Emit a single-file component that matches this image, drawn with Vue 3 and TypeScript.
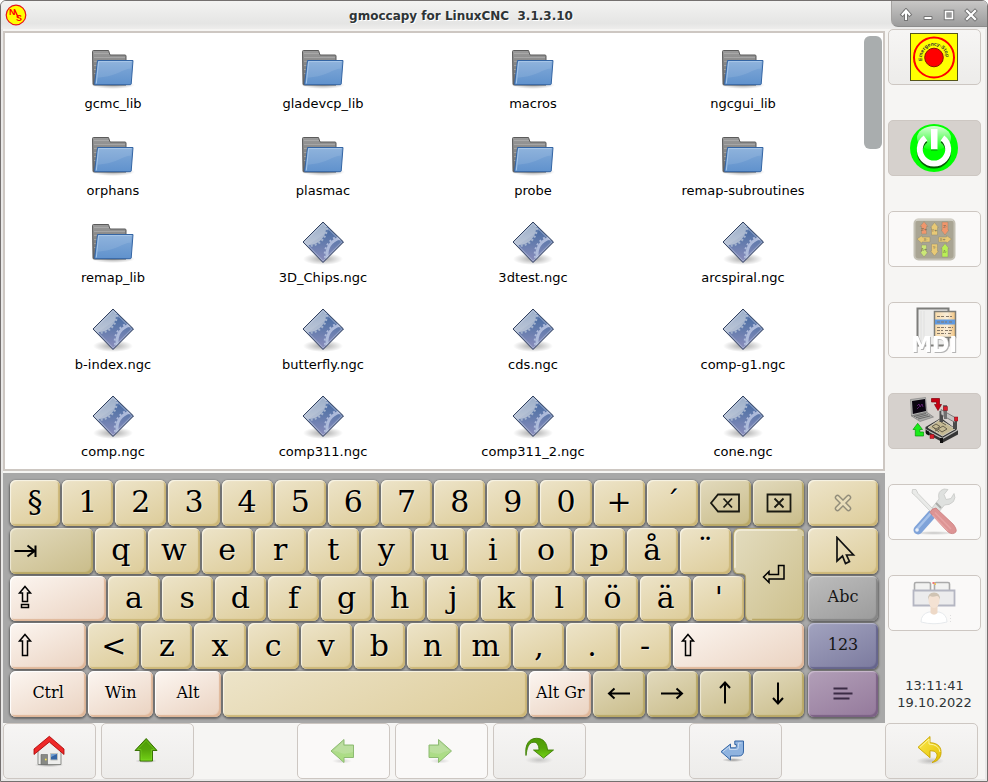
<script setup lang="ts">
interface FileEntry {
  name: string
  kind: 'folder' | 'gcode'
}

interface Key {
  label: string
  weight: number
  icon?: string
  tone?: string
  small?: boolean
  start?: boolean
}

interface ToolButton {
  label: string
  icon: string
  disabled?: boolean
  active?: boolean
}

const folder = (name: string): FileEntry => ({ name, kind: 'folder' })
const gcode = (name: string): FileEntry => ({ name, kind: 'gcode' })

const files: FileEntry[] = [
  ...['gcmc_lib', 'gladevcp_lib', 'macros', 'ngcgui_lib', 'orphans', 'plasmac', 'probe', 'remap-subroutines', 'remap_lib'].map(folder),
  ...['3D_Chips.ngc', '3dtest.ngc', 'arcspiral.ngc', 'b-index.ngc', 'butterfly.ngc', 'cds.ngc', 'comp-g1.ngc', 'comp.ngc', 'comp311.ngc', 'comp311_2.ngc', 'cone.ngc'].map(gcode),
]

const letters = (text: string): Key[] => [...text].map((label) => ({ label, weight: 51 }))
const symbol = (label: string, icon: string, weight = 51): Key => ({ label, icon, weight, tone: 'olive' })
const modifier = (label: string, weight: number): Key => ({ label, weight, tone: 'rose', small: true })

const rows: Key[][] = [
  [{ label: '§', weight: 50 }, ...letters('1234567890+´'), symbol('Backspace', 'k-back'), symbol('Delete', 'k-del')],
  [{ ...symbol('Tab', 'k-tab', 83), start: true }, ...letters('qwertyuiopå¨')],
  [{ label: 'Caps Lock', icon: 'k-caps', weight: 96, tone: 'rose', start: true }, ...letters("asdfghjklöä'")],
  [
    { label: 'Left Shift', icon: 'k-shift', weight: 76, tone: 'rose', start: true },
    ...letters('<zxcvbnm,.-'),
    { label: 'Right Shift', icon: 'k-shift', weight: 131, tone: 'rose', start: true },
  ],
  [
    modifier('Ctrl', 76),
    modifier('Win', 65),
    modifier('Alt', 65),
    { label: ' ', weight: 304 },
    modifier('Alt Gr', 62),
    symbol('Left', 'k-left'),
    symbol('Right', 'k-right'),
    symbol('Up', 'k-up'),
    symbol('Down', 'k-down'),
  ],
]

const sideKeys: Key[] = [
  { label: 'Close keyboard', icon: 'k-close', weight: 1 },
  { label: 'Move keyboard', icon: 'k-pointer', weight: 1 },
  { label: 'Abc', weight: 1, tone: 'gray', small: true },
  { label: '123', weight: 1, tone: 'blue', small: true },
  { label: 'Snippets', icon: 'k-menu', weight: 1, tone: 'violet' },
]

const modes: ToolButton[] = [
  { label: 'Emergency stop', icon: 'i-estop' },
  { label: 'Machine power', icon: 'i-power', active: true },
  { label: 'Manual mode', icon: 'i-jog', disabled: true },
  { label: 'MDI mode', icon: 'i-mdi', disabled: true },
  { label: 'Auto mode', icon: 'i-auto', active: true },
  { label: 'Settings', icon: 'i-tools', disabled: true },
  { label: 'User tabs', icon: 'i-user', disabled: true },
]

const actions: (ToolButton | null)[] = [
  { label: 'Home directory', icon: 'i-home' },
  { label: 'Parent directory', icon: 'i-up' },
  null,
  { label: 'Previous file', icon: 'i-prev', disabled: true },
  { label: 'Next file', icon: 'i-next', disabled: true },
  { label: 'Jump to user directory', icon: 'i-jump' },
  null,
  { label: 'Select file', icon: 'i-select' },
  null,
  { label: 'Back', icon: 'i-undo' },
]

const windowControls = [
  { label: 'Shade', icon: 'w-shade' },
  { label: 'Minimise', icon: 'w-min' },
  { label: 'Maximise', icon: 'w-max' },
  { label: 'Close', icon: 'w-close' },
]
</script>

<template>
  <div class="window">
    <svg class="sprite" width="0" height="0" aria-hidden="true">
      <defs>
        <linearGradient id="gBack" x1="0" y1="0" x2="0" y2="1"><stop offset="0" stop-color="#9a9a9a" /><stop offset="1" stop-color="#666" /></linearGradient>
        <linearGradient id="gFront" x1="0" y1="0" x2="0" y2="1"><stop offset="0" stop-color="#82aad8" /><stop offset="1" stop-color="#6092cd" /></linearGradient>
        <linearGradient id="gDia" x1="0" y1="0" x2="0" y2="1"><stop offset="0" stop-color="#3f669f" /><stop offset=".45" stop-color="#5f79ab" /><stop offset="1" stop-color="#8d8fbd" /></linearGradient>
        <linearGradient id="gGear" x1="0" y1="0" x2="0" y2="1"><stop offset="0" stop-color="#7f9abc" /><stop offset="1" stop-color="#b4bfd3" /></linearGradient>
        <radialGradient id="gShade"><stop offset="0" stop-color="#000" stop-opacity=".35" /><stop offset="1" stop-color="#000" stop-opacity="0" /></radialGradient>
        <linearGradient id="gGreen" x1="0" y1="0" x2="0" y2="1"><stop offset="0" stop-color="#4e9a06" /><stop offset=".5" stop-color="#56a60a" /><stop offset="1" stop-color="#73d216" /></linearGradient>
        <linearGradient id="gPale" x1="0" y1="0" x2="0" y2="1"><stop offset="0" stop-color="#b4d69a" /><stop offset="1" stop-color="#a9e07c" /></linearGradient>
        <linearGradient id="gGloss" x1="0" y1="0" x2="0" y2="1"><stop offset="0" stop-color="#fff" stop-opacity=".85" /><stop offset="1" stop-color="#fff" stop-opacity=".05" /></linearGradient>
        <linearGradient id="gPage" x1="0" y1="0" x2="1" y2="0"><stop offset="0" stop-color="#f8d9a6" /><stop offset=".6" stop-color="#f8edd9" /><stop offset="1" stop-color="#f2c27c" /></linearGradient>
        <linearGradient id="gKey" x1="0" y1="0" x2="1" y2="1"><stop offset="0" stop-color="#e3dcbf" /><stop offset="1" stop-color="#cdc08c" /></linearGradient>
        <linearGradient id="gYellow" x1="0" y1="0" x2="1" y2="1"><stop offset="0" stop-color="#fce94f" /><stop offset="1" stop-color="#e3c000" /></linearGradient>
        <clipPath id="cDia"><path d="M24 4 44.500 24 24 44.500 4 24Z" /></clipPath>
        <path id="pStop" d="M12.400 27.600A12 12 0 1 1 35 29.500" />
      </defs>

      <symbol id="i-folder" viewBox="0 0 48 48">
        <ellipse cx="24" cy="41" rx="22" ry="4" fill="url(#gShade)" />
        <path d="M3.500 7.500q0-1 1-1h15l1.500 4.500h15q1 0 1 1v29h-32q-1 0-1-1Z" fill="url(#gBack)" stroke="#5b5b5b" />
        <path d="M5 13.500h31M5 17.500h3M5 21.500h3M5 25.500h3M5 29.500h3M5 9.500h15" stroke="#b5b5b5" stroke-width="1" opacity=".6" />
        <path d="M8.500 16.500h35.500l-1.800 23.500q-.200.700-1 .700h-35q-.800 0-.6-1Z" fill="url(#gFront)" stroke="#3465a4" />
        <path d="M9.500 17.800h33l-.8 7c-9 0-11 7-33 9Z" fill="#fff" opacity=".1" />
        <path d="M7.300 39.500 9.600 17.600h33" fill="none" stroke="#b4cfec" stroke-width=".8" />
      </symbol>
      <symbol id="i-gcode" viewBox="0 0 48 48">
        <ellipse cx="24" cy="41" rx="20" ry="6" fill="url(#gShade)" />
        <path d="M24 4 44.500 24 24 44.500 4 24Z" fill="url(#gDia)" />
        <g clip-path="url(#cDia)">
          <circle cx="10" cy="10" r="17" fill="url(#gGear)" />
          <circle cx="10" cy="10" r="17.800" fill="none" stroke="#a3b3cd" stroke-width="2.200" stroke-dasharray="2 2" />
          <circle cx="44" cy="36" r="16" fill="none" stroke="#aebbdb" stroke-width="3" />
          <circle cx="44" cy="36" r="18.200" fill="none" stroke="#aebbdb" stroke-width="2" stroke-dasharray="2 2.400" />
          <path d="M0 24 24 0 34 10 8 28Z" fill="#fff" opacity=".1" />
        </g>
        <path d="M24 5.800 42.700 24 24 42.800 5.800 24Z" fill="none" stroke="#c9d3e4" stroke-width=".8" opacity=".7" />
        <path d="M24 4 44.500 24 24 44.500 4 24Z" fill="none" stroke="#32415f" stroke-width="1" />
      </symbol>

      <symbol id="i-estop" viewBox="0 0 48 48">
        <rect x=".500" y=".500" width="47" height="47" fill="#ff0" stroke="#55551a" />
        <circle cx="24" cy="24.500" r="20" fill="none" stroke="#f00" stroke-width="2" />
        <circle cx="24" cy="24.500" r="9.300" fill="#f00" stroke="#8a1000" />
      </symbol>
      <symbol id="i-power" viewBox="0 0 48 48">
        <circle cx="24" cy="24" r="24" fill="#0f0" />
        <ellipse cx="24" cy="14" rx="17" ry="12" fill="url(#gGloss)" />
        <path d="M15.500 14.500A14.200 14.200 0 1 0 32.500 14.500" fill="none" stroke="#075c07" stroke-width="6" transform="translate(0 1.500)" />
        <path d="M15.500 14A14.200 14.200 0 1 0 32.500 14" fill="none" stroke="#fff" stroke-width="6" />
        <path d="M21 5h6.500v20.500H21Z" fill="#fff" />
        <path d="M21 26h6.500" stroke="#0a8a0a" />
      </symbol>
      <symbol id="i-jog" viewBox="0 0 48 48">
        <rect x="4.500" y="4.500" width="40" height="40" rx="4" fill="#a9a594" stroke="#c3c0b4" stroke-width="2" />
        <path d="M6 5h37" stroke="#e4e3dc" />
        <g stroke="#8f8a75" stroke-width=".500">
          <path d="M14 6.500l4 5h-1.500v7.500h-5v-7.500H10Z" fill="#f0966c" /><path d="M24.500 7.500l4 5H27.500v7.500h-6v-7.500h-1Z" fill="#e8c975" /><path d="M35 20l4-5h-1V7h-6v8H31Z" fill="#f0966c" />
          <path d="M7 24l5-3.500V22h8v5h-8v1.500Z" fill="#e8c975" /><path d="M41.500 24l-5-3.500V22h-8v5h8v1.500Z" fill="#e8c975" />
          <path d="M14 42l4-5h-1.500v-7h-5v7H10Z" fill="#cbe877" /><path d="M24.500 41l4-5H27.500v-7h-6v7h-1Z" fill="#e8c975" /><path d="M35 28.500l4 5h-1v8.500h-6v-8.500H31Z" fill="#b9ef55" />
        </g>
      </symbol>
      <symbol id="i-mdi" viewBox="0 0 48 48">
        <rect x="7.500" y="2.500" width="31" height="37" fill="#ededec" stroke="#7d7d7a" stroke-width="2" />
        <path d="M11 5v32M14 5v32" stroke="#e0e0df" />
        <rect x="24.500" y="5.500" width="21" height="26" fill="url(#gPage)" stroke="#7d7d77" stroke-width="1.500" />
        <rect x="25" y="13.500" width="20" height="5" fill="#609ae0" />
        <path d="M27 10.500h7m2 0h6M27 16h10m2 0h4M27 21.500h9m2 0h5M27 24.500h6m2 0h7M27 27.500h9m2 0h4" stroke="#85796a" stroke-width="1" stroke-dasharray="3 1" />
      </symbol>
      <symbol id="i-auto" viewBox="0 0 48 48">
        <path d="M.5 2.500 15.500.500 17 15 1.500 19Z" fill="#b6b6b4" stroke="#777" stroke-width=".600" />
        <path d="M2 4 15 2 16 14 2.800 17Z" fill="#0a0510" />
        <path d="M7 9l2-2 1 3 2-3 1 3M7 12l2-2" stroke="#8a2ba5" fill="none" stroke-width=".600" />
        <path d="M1.500 19 17 15.300 23.500 20 10 24.500Z" fill="#a9a9a7" stroke="#666" stroke-width=".500" />
        <path d="M4 19.500 16 16.500M6 20.700 18 17.700M8 22 20 19" stroke="#4c4c4c" stroke-width=".700" />
        <path d="M21.500 1.500h8v6h2L28 13.500 24.500 7.500h2v-2.500h-5Z" fill="#c60012" stroke="#82000c" stroke-width=".700" />
        <path d="M7.700 26.300 12.500 32.500H9.800v2.500h3.700v4H5.300v-6.500H3Z" fill="#1bec1b" stroke="#0a970a" stroke-width=".700" />
        <path d="M15.500 30 31 21 48 33.500v4L33 45.500 15.500 36Z" fill="#353535" />
        <path d="M18 30.500 30 22.500 45 32 32.500 39Z" fill="#c5ba94" stroke="#e8e6df" stroke-width=".700" />
        <path d="M22 29.500l4-2.500 4 2.500-4 2.500ZM28 32l5-3 4 3-5 3ZM25 34l3-1.500M31 25l5 3M24 31l5 4" fill="none" stroke="#5b5645" stroke-width=".900" />
        <path d="M15.500 32.500 32.500 41.500 47.500 33" fill="none" stroke="#bdbdbb" stroke-width="1.300" />
        <path d="M29.500 14h3.500v11h-3.500ZM43 20h4v12h-4Z" fill="#4a4a4a" />
        <path d="M31 12.500l14 8v5l-14-8Z" fill="#c4c4c2" stroke="#5c5c5c" stroke-width=".700" />
        <path d="M33 8h4v14h-3Z" fill="#707070" /><path d="M33.500 9.500h4v4h-4ZM44.500 20h3.500v4H44.500ZM20 37.500h4v4h-4Z" fill="#dc1d2a" stroke="#7d1119" stroke-width=".500" />
        <path d="M16 33v4l3 1.500v-4ZM30 41v5h3v-5Z" fill="#111" />
      </symbol>
      <symbol id="i-tools" viewBox="0 0 48 48">
        <ellipse cx="24" cy="45" rx="23" ry="2" fill="url(#gShade)" opacity=".6" />
        <path d="M24 24 8 42" stroke="#7fa3d9" stroke-width="9" stroke-linecap="round" />
        <path d="M22 24 7 41" stroke="#a8c3ea" stroke-width="2.500" stroke-linecap="round" />
        <circle cx="7" cy="42" r="1.800" fill="#e9eff8" />
        <path d="M22 20 29 11Q27 3 34 1l4 .5-4 5 2 5 5-1 3-5q2 4-.5 8-4 4-9 3.500L28 25Z" fill="#dfe1df" stroke="#c8c9c7" stroke-width=".800" />
        <path d="M26 15l5 5" stroke="#aaaba8" stroke-width="2" />
        <path d="M2.500 1.500 6 1.500 8 5.500 23 21 20.500 23.500 5.500 8 2 5Z" fill="#e9eae8" stroke="#c8c9c7" stroke-width=".800" />
        <path d="M20 24.500q1-4 6-4.500L43.500 36.500q5 7 1 8.500-4 2-8-2.500Z" fill="#dd9494" stroke="#c97c7c" stroke-width=".800" />
        <path d="M25 24.500 41 41M22.500 27 38 43" stroke="#e6a4a4" stroke-width="1.500" />
      </symbol>
      <symbol id="i-user" viewBox="0 0 48 48">
        <path d="M4.500 11V5q0-1.500 1.500-1.500h13q1.500 0 1.500 1.500v6M24.500 11V5q0-1.500 1.500-1.500h12q1.500 0 1.500 1.500v6" fill="#f2f2f1" stroke="#aaa" stroke-width="1.600" />
        <path d="M3.500 11.500h41v15h-41Z" fill="#ececed" stroke="#b4b6c2" stroke-width="1.800" />
        <path d="M22.500 4h2" stroke="#e77" stroke-width="2" /><path d="M24.500 5h1.500" stroke="#f4c95c" stroke-width="2" />
        <path d="M11 43q0-8 8-10h10q8 2 8 10-13 3.500-26 0Z" fill="#fff" stroke="#e1e5e8" stroke-width=".800" />
        <path d="M20.500 26h7v8q-3.500 3.500-7 0Z" fill="#eed9c7" />
        <ellipse cx="24" cy="21.500" rx="5.500" ry="7.500" fill="#f4e2d3" />
        <path d="M18 21q-.500-7.500 6-7.500t6 7.500q-1-4-3-4-5 1.500-7 0-1.500 1-2 4Z" fill="#cfc3b3" />
        <path d="M40.500 36v8" stroke="#dedede" stroke-dasharray="1 2" />
      </symbol>

      <symbol id="i-home" viewBox="0 0 32 32">
        <ellipse cx="16" cy="30" rx="15" ry="2" fill="url(#gShade)" />
        <path d="M5 16 16.300 6 28 16v13.500H5Z" fill="#eeeeec" stroke="#8a8c88" />
        <path d="M8 19.500h6.500v10H8Z" fill="#888a85" stroke="#666" stroke-width=".600" /><circle cx="12.800" cy="24.500" r=".900" fill="#fce94f" />
        <path d="M17.500 18.500h7v6.500h-7Z" fill="#3465a4" stroke="#c0c2be" /><path d="M18 19h6l-6 3Z" fill="#729fcf" />
        <path d="M1 19.500v-5.500L16.300 1.300 31 14v5.500L16.300 7Z" fill="#ef2929" stroke="#a40000" stroke-width=".800" />
      </symbol>
      <symbol id="i-up" viewBox="0 0 32 32">
        <ellipse cx="15" cy="26" rx="11" ry="2" fill="url(#gShade)" />
        <path d="M15.200 3.500 26 15.500h-4.500V26H9V15.500H4Z" fill="url(#gGreen)" stroke="#3a7304" />
        <path d="M15.200 5.500 23.500 14.500h-3V25H10V14.500H6.500Z" fill="none" stroke="#8ae234" stroke-width=".700" opacity=".6" />
      </symbol>
      <symbol id="i-prev" viewBox="0 0 32 32">
        <ellipse cx="15" cy="26" rx="10" ry="2.500" fill="url(#gShade)" opacity=".4" />
        <path d="M4 16 17 4.500V10h9.500v12.500H17v5Z" fill="url(#gPale)" stroke="#8dbb72" />
        <path d="M6 16q5 0 8 2t12-1V11H16V7Z" fill="#fff" opacity=".15" />
      </symbol>
      <symbol id="i-next" viewBox="0 0 32 32">
        <ellipse cx="15" cy="26" rx="10" ry="2.500" fill="url(#gShade)" opacity=".4" />
        <path d="M26.500 16 13.500 4.500V10H4v12.500h9.500v5Z" fill="url(#gPale)" stroke="#8dbb72" />
        <path d="M24.500 16q-5 0-8 2T5 17v-6h9.500V7Z" fill="#fff" opacity=".15" />
      </symbol>
      <symbol id="i-jump" viewBox="0 0 32 32">
        <ellipse cx="16" cy="25" rx="14" ry="4" fill="url(#gShade)" opacity=".5" />
        <path d="M3 20.500C1.500 9 6.500 3.300 13.500 3.300 20.500 3.300 24 8 24.500 15h6L20.500 23 10.500 15h5.500C16 9.500 13.500 6.700 10 7.300 5.500 8 4 13 3 20.500Z" fill="url(#gGreen)" stroke="#3f7f05" stroke-width=".900" />
      </symbol>
      <symbol id="i-select" viewBox="0 0 32 32">
        <ellipse cx="14" cy="25" rx="11" ry="2" fill="url(#gShade)" />
        <path d="M2 16.700 11.500 9v3.800h4.800q1 0 1-1.200V9.500h-1.500V6h8.700v10q0 5-5 5h-8v4Z" fill="#8fb3df" stroke="#3465a4" />
        <path d="M4 16.700 10.500 11.500v3h7q2 0 2-3V8h3" fill="none" stroke="#c9dcf2" stroke-width=".900" />
      </symbol>
      <symbol id="i-undo" viewBox="0 0 32 32">
        <ellipse cx="15" cy="26" rx="14" ry="4" fill="url(#gShade)" opacity=".6" />
        <path d="M3 12.300 15 1.500v6.200C24 8 26.500 13 26 18.500c-.500 5-4 8-9 9 4-2.500 6-6 4.500-9.500Q20 15.500 15 15.700v7Z" fill="url(#gYellow)" stroke="#c9a500" stroke-width=".900" />
        <path d="M5 12.300 14 4v5q10 .5 11 8" fill="none" stroke="#fff8a8" stroke-width=".900" />
      </symbol>

      <symbol id="k-tab" viewBox="0 0 30 30"><path d="M4.500 15H25M17.500 9.500 24.500 15l-7 5.500M25.500 9.500v11.500" fill="none" stroke="#000" stroke-width="2" /></symbol>
      <symbol id="k-caps" viewBox="0 0 30 30"><path d="M15 3.500 20.500 10h-3v8.500h-5V10h-3ZM11.500 21.500h7v3h-7Z" fill="none" stroke="#000" stroke-width="1.500" /></symbol>
      <symbol id="k-shift" viewBox="0 0 30 30"><path d="M15 3.500 20.500 10h-3v14.500h-5V10h-3Z" fill="none" stroke="#000" stroke-width="1.500" /></symbol>
      <symbol id="k-enter" viewBox="0 0 30 30"><path d="M4.500 17 10 11.500v3h9.500V5.500h5.500V19H10v3.500Z" fill="none" stroke="#000" stroke-width="1.500" /></symbol>
      <symbol id="k-back" viewBox="0 0 30 30"><path d="M1 15 8 6.500h21v17H8ZM13.500 10.500l8.500 9M22 10.500l-8.500 9" fill="none" stroke="#1a1a12" stroke-width="1.800" /></symbol>
      <symbol id="k-del" viewBox="0 0 30 30"><path d="M3.500 6.500h23v17h-23ZM10.500 10.500l9 9M19.500 10.500l-9 9" fill="none" stroke="#1a1a12" stroke-width="1.800" /></symbol>
      <symbol id="k-close" viewBox="0 0 30 30"><path d="M9.500 9.500 20.500 20.500M20.500 9.500 9.500 20.500" stroke="#928d7a" stroke-width="5.500" stroke-linecap="round" /><path d="M9.500 9.500 20.500 20.500M20.500 9.500 9.500 20.500" stroke="#e8ddba" stroke-width="2.600" stroke-linecap="round" /></symbol>
      <symbol id="k-pointer" viewBox="0 0 30 30"><path d="M9 1.500V25l5.500-5 3 7.500 4-2-3-6.500h7Z" fill="none" stroke="#111" stroke-width="1.700" /></symbol>
      <symbol id="k-menu" viewBox="0 0 30 30"><path d="M5.500 9.500h14M5.500 14.500h19M5.500 19.500h16" stroke="#3b2b45" stroke-width="2" /></symbol>
      <symbol id="k-left" viewBox="0 0 30 30"><path d="M5 14.500h21M10.500 9.500 5 14.500l5.500 5" fill="none" stroke="#000" stroke-width="2" /></symbol>
      <symbol id="k-right" viewBox="0 0 30 30"><path d="M25 14.500H4M19.500 9.500 25 14.500l-5.500 5" fill="none" stroke="#000" stroke-width="2" /></symbol>
      <symbol id="k-up" viewBox="0 0 30 30"><path d="M15 3.500v21M10 9 15 3.500l5 5.500" fill="none" stroke="#000" stroke-width="2" /></symbol>
      <symbol id="k-down" viewBox="0 0 30 30"><path d="M15 24.500V3.500M10 19 15 24.500l5-5.500" fill="none" stroke="#000" stroke-width="2" /></symbol>

      <symbol id="w-shade" viewBox="0 0 14 14"><path d="M7 2.500 10.500 6.500M7 2.500 3.500 6.500M7 3.500v7.500" fill="none" stroke="#747474" stroke-width="4" stroke-linecap="square" /><path d="M7 2.500 10.500 6.500M7 2.500 3.500 6.500M7 3.500v7.500" fill="none" stroke="#fff" stroke-width="2" stroke-linecap="square" /></symbol>
      <symbol id="w-min" viewBox="0 0 14 14"><path d="M3 8.500h8v3H3Z" fill="#fff" stroke="#747474" /></symbol>
      <symbol id="w-max" viewBox="0 0 14 14"><path d="M3.500 3.500h7v7h-7Z" fill="none" stroke="#747474" stroke-width="3.500" /><path d="M3.500 3.500h7v7h-7Z" fill="#999" stroke="#fff" stroke-width="1.500" /></symbol>
      <symbol id="w-close" viewBox="0 0 14 14"><path d="M3 3 11 11M11 3 3 11" stroke="#747474" stroke-width="4" stroke-linecap="square" /><path d="M3 3 11 11M11 3 3 11" stroke="#fff" stroke-width="2.200" stroke-linecap="square" /></symbol>
    </svg>

    <header class="titlebar">
      <svg class="logo" viewBox="0 0 22 22" aria-hidden="true">
        <circle cx="11" cy="11" r="9.800" fill="#ff0" stroke="#e8101a" stroke-width="1.200" />
        <path d="M9.500 5.500 13.500 14" stroke="#f00" stroke-width="1.400" />
        <text class="logo-letter" x="4" y="11">N</text>
        <text class="logo-letter" x="11" y="17">S</text>
      </svg>
      <h1 class="title">gmoccapy for LinuxCNC&nbsp; 3.1.3.10</h1>
      <div class="controls">
        <button v-for="c in windowControls" :key="c.icon" type="button" class="control" :aria-label="c.label">
          <svg class="control-icon"><use :href="'#' + c.icon" /></svg>
        </button>
      </div>
    </header>

    <div class="body">
      <div class="upper">
        <main class="main">
          <section class="browser" aria-label="Files">
            <ul class="files">
              <li v-for="f in files" :key="f.name">
                <button type="button" class="file">
                  <svg class="file-icon"><use :href="'#i-' + f.kind" /></svg>
                  <span>{{ f.name }}</span>
                </button>
              </li>
            </ul>
            <div class="track"><div class="thumb"></div></div>
          </section>

          <section class="keyboard" aria-label="On-screen keyboard">
            <div class="key-main">
              <div v-for="(row, i) in rows" :key="i" class="key-row" :class="'row-' + (i + 1)">
                <button
                  v-for="(k, j) in row"
                  :key="j"
                  type="button"
                  class="key"
                  :class="[k.tone, { small: k.small, start: k.start }]"
                  :style="{ flexGrow: k.weight }"
                  :aria-label="k.label === ' ' ? 'Space' : k.label"
                >
                  <svg v-if="k.icon" class="key-icon"><use :href="'#' + k.icon" /></svg>
                  <span v-else>{{ k.label }}</span>
                </button>
              </div>
              <button type="button" class="enter" aria-label="Enter">
                <svg class="enter-shape" viewBox="0 0 71 94" preserveAspectRatio="none">
                  <path d="M7 .500H64Q71 .500 71 7V87Q71 93.500 64 93.500H19Q12.500 93.500 12.500 87V50Q12.500 46 8.500 46H6Q.500 46 .500 40V7Q.500 .500 7 .500Z" fill="url(#gKey)" stroke="#b1a36b" />
                  <path d="M2 40V8Q2 2 8 2H64" fill="none" stroke="#f3eedb" stroke-width="1.500" />
                  <path d="M69.500 8V86Q69 92 63 92H19" fill="none" stroke="#b9a764" stroke-width="1.500" />
                </svg>
                <svg class="key-icon enter-icon"><use href="#k-enter" /></svg>
              </button>
            </div>
            <div class="key-side">
              <button v-for="k in sideKeys" :key="k.label" type="button" class="key" :class="[k.tone, { small: k.small }]" :aria-label="k.label">
                <svg v-if="k.icon" class="key-icon"><use :href="'#' + k.icon" /></svg>
                <span v-else>{{ k.label }}</span>
              </button>
            </div>
          </section>
        </main>

        <aside class="modes">
          <button v-for="m in modes" :key="m.icon" type="button" class="tool" :class="{ active: m.active }" :disabled="m.disabled" :aria-label="m.label">
            <svg class="mode-icon" viewBox="0 0 48 48">
              <use :href="'#' + m.icon" />
              <text v-if="m.icon === 'i-estop'" class="stop-text"><textPath href="#pStop">Emergency-Stop</textPath></text>
              <text v-if="m.icon === 'i-mdi'" class="mdi-text" x="24" y="46">MDI</text>
              <g v-if="m.icon === 'i-jog'" class="jog-text">
                <text x="14" y="16">Z+</text>
                <text x="24.500" y="17">Y+</text>
                <text x="35" y="13">Z-</text>
                <text x="15.500" y="26">X-</text>
                <text x="32.500" y="26">X+</text>
                <text x="14" y="36">A+</text>
                <text x="24.500" y="34">Y-</text>
                <text x="35" y="38">A-</text>
              </g>
            </svg>
          </button>
          <div class="clock"><div>13:11:41</div><div>19.10.2022</div></div>
        </aside>
      </div>

      <footer class="actions">
        <template v-for="(a, i) in actions" :key="i">
          <button v-if="a" type="button" class="tool" :disabled="a.disabled" :aria-label="a.label">
            <svg class="action-icon"><use :href="'#' + a.icon" /></svg>
          </button>
          <span v-else></span>
        </template>
      </footer>
    </div>
  </div>
</template>

<style>
body {
  margin: 0;
  background: #fff;
}
</style>

<style scoped>
* {
  box-sizing: border-box;
}

button {
  margin: 0;
  padding: 0;
  font: inherit;
  color: inherit;
  border: 0;
  background: none;
}

svg {
  display: block;
  flex: none;
}

.sprite {
  position: absolute;
}

.window {
  display: flex;
  flex-direction: column;
  min-height: 100vh;
  border: 1px solid #74706f;
  border-radius: 6px 6px 0 0;
  overflow: hidden;
  background: #e9e8e7;
  font-family: "DejaVu Sans", sans-serif;
  font-size: 13px;
  color: #000;
}

.titlebar {
  display: flex;
  align-items: center;
  height: 28px;
  background: linear-gradient(#f3f3f2, #e5e5e4 80%, #eeedec);
}

.logo {
  width: 22px;
  height: 22px;
  margin: 0 4px;
}

.logo-letter {
  font-family: "Liberation Sans", sans-serif;
  font-size: 9px;
  font-weight: bold;
  fill: #f00;
}

.title {
  flex: 1;
  margin: 0;
  text-align: center;
  font-size: 12px;
  font-weight: bold;
  line-height: 18px;
  padding-top: 2px;
  color: #2e3436;
  text-shadow: 1px 1px 0 #fff;
}

.controls {
  display: flex;
  justify-content: space-between;
  align-self: flex-start;
  width: 96px;
  height: 26px;
  padding: 2px 9px 0 7px;
  border-left: 1px solid #a4a2a0;
  border-bottom: 1px solid #8c8c8c;
  border-bottom-left-radius: 7px;
  background: linear-gradient(#c8c7c6, #9c9c9c);
}

.control {
  display: flex;
  align-items: center;
}

.control-icon {
  width: 14px;
  height: 14px;
}

.body {
  flex: 1;
  display: flex;
  flex-direction: column;
  margin: 0 2px 2px;
  background: #f6f5f3;
}

.upper {
  flex: 1;
  display: flex;
}

.main {
  flex: 1;
  min-width: 0;
  display: flex;
  flex-direction: column;
  gap: 2px;
  padding-top: 2px;
}

.browser {
  flex: 1;
  display: flex;
  justify-content: space-between;
  gap: 16px;
  padding-left: 3px;
  border: 2px solid #cdc7c2;
  background: #fff;
}

.files {
  flex: 1;
  display: grid;
  grid-template-columns: repeat(4, 1fr);
  align-content: start;
  row-gap: 18px;
  margin: 0;
  padding: 11px 0 0;
  list-style: none;
}

.file {
  display: flex;
  flex-direction: column;
  align-items: center;
  gap: 3px;
  width: 100%;
  line-height: 18px;
}

.file-icon {
  width: 48px;
  height: 48px;
}

.track {
  width: 19px;
  padding: 3px 1px 3px 0;
}

.thumb {
  height: 113px;
  border-radius: 6px;
  background: #a9adae;
}

.keyboard {
  display: flex;
  gap: 4px;
  height: 250px;
  padding: 7px 7px 6px;
  background: #a8a8a8;
  font-family: "DejaVu Serif", serif;
}

.key-main {
  flex: 1;
  display: grid;
  grid-template-columns: 100%;
  grid-template-rows: repeat(5, 1fr);
  row-gap: 2px;
}

.key-row {
  grid-column: 1;
  display: flex;
  gap: 2px;
  min-height: 0;
}

.row-1 {
  grid-row: 1;
}

.row-2 {
  grid-row: 2;
  margin-right: 9.2%;
}

.row-3 {
  grid-row: 3;
  margin-right: 7.5%;
}

.row-4 {
  grid-row: 4;
}

.row-5 {
  grid-row: 5;
}

.key-side {
  display: grid;
  grid-template-rows: repeat(5, 1fr);
  row-gap: 2px;
  width: 70px;
}

.key {
  flex: 1 1 0;
  min-width: 0;
  min-height: 0;
  display: flex;
  align-items: center;
  justify-content: center;
  border-radius: 6px;
  background: linear-gradient(155deg, #ede4c9, #ddcc99);
  box-shadow: inset 1px 1px 1px #f8f4e6, inset -2px -2px 1px #cdb778, 0 1px 2px 1px #666;
  font-size: 30px;
  line-height: 40px;
  white-space: nowrap;
  text-shadow: 1px 1px 0 #fff8;
}

.key span {
  padding-bottom: 1px;
}

.key.small {
  font-size: 16px;
}

.key.small span {
  padding-bottom: 3px;
}

.key.start {
  justify-content: flex-start;
}

.key.olive {
  background: linear-gradient(155deg, #e2dabd, #c9bc89);
  box-shadow: inset 1px 1px 1px #eee9d6, inset -2px -2px 1px #b9a866, 0 1px 2px 1px #666;
}

.key.rose {
  background: linear-gradient(155deg, #fcf6f1, #ead2c0);
  box-shadow: inset 1px 1px 1px #fff, inset -2px -2px 1px #dfb799, 0 1px 2px 1px #666;
}

.key.gray {
  background: linear-gradient(155deg, #bdbdbd, #9b9b9b);
  box-shadow: inset 1px 1px 1px #d4d4d4, inset -2px -2px 1px #868686, 0 1px 2px 1px #666;
}

.key.blue {
  background: linear-gradient(155deg, #a2a3bf, #7b7a9e);
  box-shadow: inset 1px 1px 1px #bdbdd2, inset -2px -2px 1px #66658c, 0 1px 2px 1px #666;
}

.key.violet {
  background: linear-gradient(155deg, #b29fb8, #94799b);
  box-shadow: inset 1px 1px 1px #cbbccf, inset -2px -2px 1px #7b6184, 0 1px 2px 1px #666;
}

.key.gray,
.key.blue,
.key.violet {
  text-shadow: none;
  color: #151515;
}

.key-icon {
  width: 30px;
  height: 30px;
}

.enter {
  grid-column: 1;
  grid-row: 2 / 4;
  justify-self: end;
  position: relative;
  display: flex;
  align-items: center;
  justify-content: center;
  width: 9%;
  padding-left: 11px;
  pointer-events: none;
}

.enter-shape {
  position: absolute;
  inset: 0;
  width: 100%;
  height: 100%;
  filter: drop-shadow(0 1px 1px #555);
}

.enter-icon {
  position: relative;
}

.modes {
  display: flex;
  flex-direction: column;
  gap: 35px;
  width: 100px;
  padding: 0 4px 0 3px;
}

.tool {
  display: flex;
  align-items: center;
  justify-content: center;
  height: 56px;
  padding-right: 1px;
  border: 1px solid #cdc7c2;
  border-radius: 5px;
  background: linear-gradient(#f6f5f4, #edecea);
}

.tool:disabled {
  background: #faf9f8;
}

.tool.active {
  background: #d6d1cd;
}

.mode-icon {
  width: 48px;
  height: 48px;
}

.stop-text {
  font-family: "Liberation Sans", sans-serif;
  font-size: 5px;
  font-weight: bold;
  fill: #333;
}

.mdi-text {
  font-size: 21px;
  font-weight: bold;
  text-anchor: middle;
  fill: #fff;
  filter: drop-shadow(1px 1px 0 #b4b4b4);
}

.jog-text {
  font-size: 4px;
  text-anchor: middle;
  fill: #6d6654;
}

.clock {
  padding-top: 11px;
  text-align: center;
  line-height: 17px;
  color: #2e3436;
}

.actions {
  display: grid;
  grid-template-columns: repeat(10, 1fr);
  gap: 5px;
  padding-right: 7px;
}

.action-icon {
  width: 32px;
  height: 32px;
}
</style>
